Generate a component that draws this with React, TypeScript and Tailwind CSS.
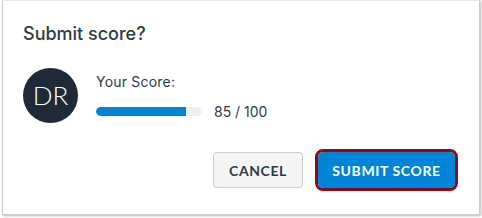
import React from "react";

export default function App() {
  return (
    <div className="w-[482px] h-[218px] bg-white" style={{ fontFamily: "Inter, 'Noto Sans', sans-serif" }}>
      <div className="ml-[2px] w-[478px] h-[215px] bg-white border border-[#c9cdd0] border-t-[#e6e8ea] shadow-[1px_1px_2px_rgba(0,0,0,0.28)] flex flex-col">
        <div className="pl-[20px] pt-[22px] text-[18px] leading-[22px] text-[#2d3b45] font-medium">Submit score?</div>
        <div className="flex pl-[20px] mt-[23px]">
          <div className="w-[55px] h-[55px] rounded-full bg-[#1e2a37] flex items-center justify-center text-white text-[26px] font-light" style={{ fontFamily: "Lato, sans-serif" }}>
            DR
          </div>
          <div className="ml-[18px] pt-[5px] flex flex-col">
            <div className="text-[14px] leading-[17px] text-[#2d3b45] tracking-[0.2px]">Your Score:</div>
            <div className="flex items-center mt-[13px]">
              <div className="w-[106px] h-[9px] rounded-full bg-[#eef0f1] overflow-hidden">
                <div className="h-full bg-[#0084d8] rounded-l-full" style={{ width: "85%" }} />
              </div>
              <div className="ml-[12px] text-[14px] leading-[17px] text-[#2d3b45]">85 / 100</div>
            </div>
          </div>
        </div>
        <div className="flex justify-end items-center pr-[21px] mt-[26px] gap-[12px]" style={{ fontFamily: "Lato, sans-serif" }}>
          <button className="w-[90px] h-[36px] rounded-[4px] bg-[#f5f5f5] border border-[#c7cdd1] text-[#2d3b45] text-[14px] font-bold tracking-[0.6px]">
            CANCEL
          </button>
          <div className="rounded-[8px] border-[3px] border-[#8c0a12] p-0">
            <button className="w-[137px] h-[36px] rounded-[5px] bg-[#0084d8] text-white text-[14px] font-bold tracking-[0.6px] block">
              SUBMIT SCORE
            </button>
          </div>
        </div>
      </div>
    </div>
  );
}
